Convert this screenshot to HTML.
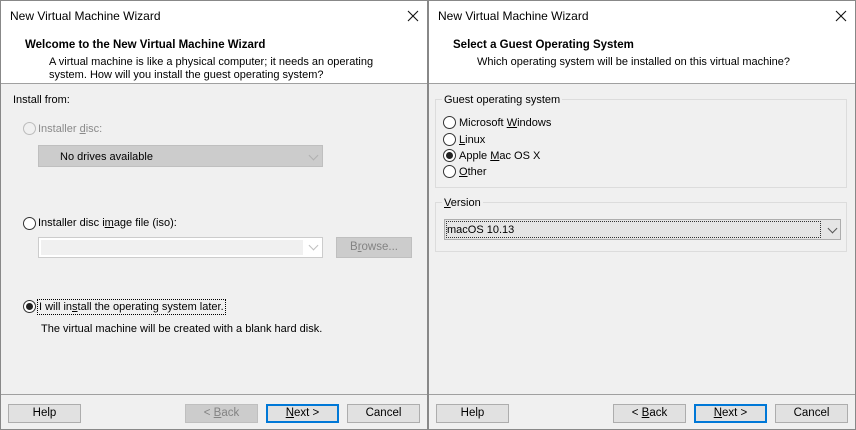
<!DOCTYPE html>
<html><head><style>
*{margin:0;padding:0;box-sizing:border-box}
body{width:856px;height:430px;background:#f0f0f0;font-family:"Liberation Sans",sans-serif;font-size:11px;color:#000;position:relative;overflow:hidden}
.win{position:absolute;top:0;width:428px;height:430px;background:#f0f0f0;border:1px solid #888;}
.a{position:absolute;white-space:nowrap}
.hdr{position:absolute;left:0;top:0;width:426px;height:83px;background:#fff;border-bottom:1px solid #a0a0a0}
.btn{position:absolute;top:403px;width:73px;height:19px;background:#e1e1e1;border:1px solid #adadad;text-align:center;line-height:17px;font-size:11.5px}
.btn.def{border:2px solid #0078d7;line-height:15px}
.btn.dis{background:#ccc;border-color:#bfbfbf;color:#838383}
.sep{position:absolute;left:0;top:393px;width:426px;height:1px;background:#a0a0a0}
.rad{position:absolute;width:13px;height:13px;border:1px solid #333;border-radius:50%;background:#fff}
.rad.on::after{content:"";position:absolute;left:2px;top:2px;width:7px;height:7px;border-radius:50%;background:#222}
.rad.dis{border-color:#bcbcbc;background:#f0f0f0}
.chev{position:absolute;width:7px;height:7px;border-right:1px solid #999;border-bottom:1px solid #999;transform:rotate(45deg)}
u{text-decoration:underline}
.x{position:absolute;left:406px;top:9px}
</style></head><body>

<div class="win" style="left:0">
  <div class="hdr"></div>
  <div class="a" style="left:9px;top:8px;font-size:12px">New Virtual Machine Wizard</div>
  <svg class="x" width="12" height="12"><path d="M1 1L11 11M11 1L1 11" stroke="#111" stroke-width="1.1"/></svg>
  <div class="a" style="left:24px;top:38px;font-weight:bold;font-size:11.5px">Welcome to the New Virtual Machine Wizard</div>
  <div class="a" style="left:48px;top:55px">A virtual machine is like a physical computer; it needs an operating</div>
  <div class="a" style="left:48px;top:68px">system. How will you install the guest operating system?</div>

  <div class="a" style="left:12px;top:93px">Install from:</div>
  <div class="rad dis" style="left:22px;top:121px"></div>
  <div class="a" style="left:37px;top:122px;color:#8a8a8a">Installer <u>d</u>isc:</div>
  <div class="a" style="left:37px;top:144px;width:285px;height:22px;background:#ccc;border:1px solid #bfbfbf"></div>
  <div class="a" style="left:59px;top:150px">No drives available</div>
  <div class="chev" style="left:309px;top:151px;border-color:#b0b0b0"></div>

  <div class="rad" style="left:22px;top:216px"></div>
  <div class="a" style="left:37px;top:216px">Installer disc i<u>m</u>age file (iso):</div>
  <div class="a" style="left:37px;top:236px;width:285px;height:21px;background:#fff;border:1px solid #ccc"></div>
  <div class="a" style="left:40px;top:239px;width:262px;height:15px;background:#f0f0f0"></div>
  <div class="chev" style="left:309px;top:241px;border-color:#c0c0c0"></div>
  <div class="btn dis" style="left:335px;top:236px;width:76px;height:21px;line-height:19px">B<u>r</u>owse...</div>

  <div class="rad on" style="left:22px;top:299px"></div>
  <div class="a" style="left:36px;top:298px;border:1px dotted #000;padding:0 1px;line-height:14px">I will in<u>s</u>tall the operating system later.</div>
  <div class="a" style="left:40px;top:322px">The virtual machine will be created with a blank hard disk.</div>

  <div class="sep"></div>
  <div class="btn" style="left:7px">Help</div>
  <div class="btn dis" style="left:184px">&lt; <u>B</u>ack</div>
  <div class="btn def" style="left:265px"><u>N</u>ext &gt;</div>
  <div class="btn" style="left:346px">Cancel</div>
</div>

<div class="win" style="left:428px">
  <div class="hdr"></div>
  <div class="a" style="left:9px;top:8px;font-size:12px">New Virtual Machine Wizard</div>
  <svg class="x" width="12" height="12"><path d="M1 1L11 11M11 1L1 11" stroke="#111" stroke-width="1.1"/></svg>
  <div class="a" style="left:24px;top:38px;font-weight:bold;font-size:11.5px">Select a Guest Operating System</div>
  <div class="a" style="left:48px;top:55px">Which operating system will be installed on this virtual machine?</div>

  <div class="a" style="left:6px;top:98px;width:412px;height:89px;border:1px solid #dcdcdc"></div>
  <div class="a" style="left:13px;top:93px;background:#f0f0f0;padding:0 2px">Guest operating system</div>
  <div class="rad" style="left:14px;top:115px"></div>
  <div class="a" style="left:30px;top:116px">Microsoft <u>W</u>indows</div>
  <div class="rad" style="left:14px;top:132px"></div>
  <div class="a" style="left:30px;top:133px"><u>L</u>inux</div>
  <div class="rad on" style="left:14px;top:148px"></div>
  <div class="a" style="left:30px;top:149px">Apple <u>M</u>ac OS X</div>
  <div class="rad" style="left:14px;top:164px"></div>
  <div class="a" style="left:30px;top:165px"><u>O</u>ther</div>

  <div class="a" style="left:6px;top:201px;width:412px;height:50px;border:1px solid #dcdcdc"></div>
  <div class="a" style="left:13px;top:196px;background:#f0f0f0;padding:0 2px"><u>V</u>ersion</div>
  <div class="a" style="left:15px;top:218px;width:397px;height:21px;background:#e5e5e5;border:1px solid #adadad"></div>
  <div class="a" style="left:17px;top:220px;width:375px;height:17px;border:1px dotted #333"></div>
  <div class="a" style="left:18px;top:223px">macOS 10.13</div>
  <div class="chev" style="left:400px;top:224px;border-color:#555"></div>

  <div class="sep"></div>
  <div class="btn" style="left:7px">Help</div>
  <div class="btn" style="left:184px">&lt; <u>B</u>ack</div>
  <div class="btn def" style="left:265px"><u>N</u>ext &gt;</div>
  <div class="btn" style="left:346px">Cancel</div>
</div>
</body></html>
